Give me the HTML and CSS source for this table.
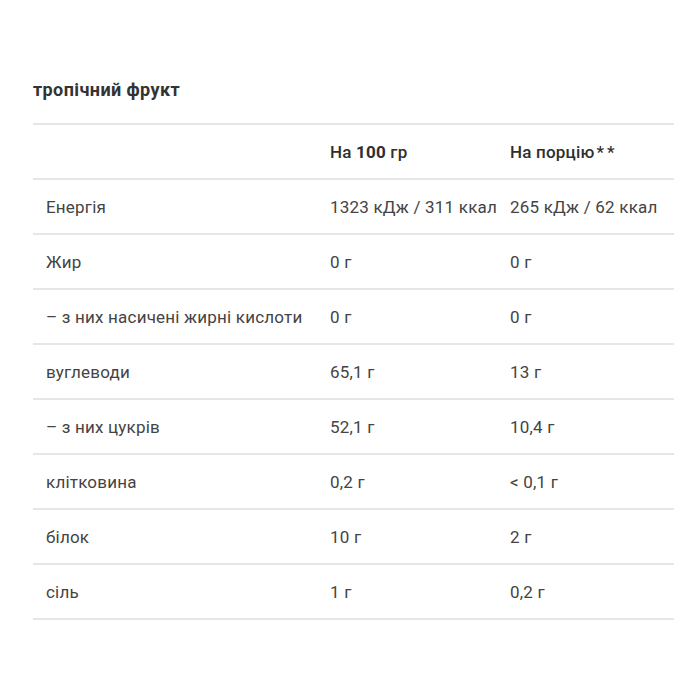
FILE: index.html
```html
<!DOCTYPE html>
<html lang="uk">
<head>
<meta charset="utf-8">
<link rel="stylesheet" href="styles.css">
</head>
<body>
<div class="wrap">
  <h3 class="title">тропічний фрукт</h3>
  <table class="nutri">
    <thead>
      <tr><th></th><th>На <b>100</b> гр</th><th>На порцію<span class="ast">**</span></th></tr>
    </thead>
    <tbody>
      <tr><td>Енергія</td><td>1323 кДж / 311 ккал</td><td>265 кДж / 62 ккал</td></tr>
      <tr><td>Жир</td><td>0 г</td><td>0 г</td></tr>
      <tr><td>– з них насичені жирні кислоти</td><td>0 г</td><td>0 г</td></tr>
      <tr><td>вуглеводи</td><td>65,1 г</td><td>13 г</td></tr>
      <tr><td>– з них цукрів</td><td>52,1 г</td><td>10,4 г</td></tr>
      <tr><td>клітковина</td><td>0,2 г</td><td>&lt; 0,1 г</td></tr>
      <tr><td>білок</td><td>10 г</td><td>2 г</td></tr>
      <tr><td>сіль</td><td>1 г</td><td>0,2 г</td></tr>
    </tbody>
  </table>
</div>
</body>
</html>
```

FILE: styles.css
```css
html, body { margin: 0; padding: 0; background: #fff; }
body { font-family: Roboto, "Noto Sans", sans-serif; color: #3a3a3a; }
.wrap { padding: 78px 26px 0 33px; }
.title { margin: 0 0 21px; font-size: 18px; font-weight: 700; line-height: 24px; letter-spacing: 0.4px; color: #333; }
.nutri { width: 641px; border-collapse: collapse; font-size: 17px; letter-spacing: 0.2px; }
.nutri th, .nutri td { height: 53px; border-top: 2px solid #e6e6e6; padding: 0 0 0 13px; text-align: left; vertical-align: middle; line-height: 20px; }
.nutri tbody tr:last-child td { border-bottom: 2px solid #e6e6e6; }
.nutri th { font-weight: 500; color: #2e2e2e; }
.nutri th b { font-weight: 700; }
.nutri th .ast { letter-spacing: 3px; padding-left: 2px; }
.nutri th:nth-child(1), .nutri td:nth-child(1) { width: 271px; }
.nutri th:nth-child(2), .nutri td:nth-child(2) { width: 167px; }
.nutri td { color: #444; }
```
